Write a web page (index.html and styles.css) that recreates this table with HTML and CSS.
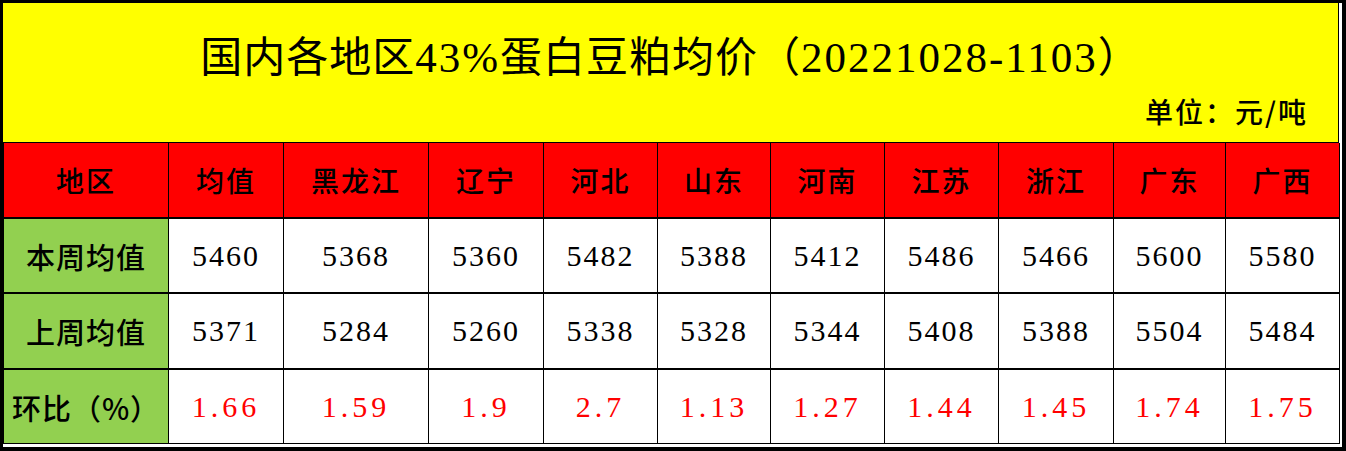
FILE: index.html
```html
<!DOCTYPE html>
<html lang="zh-CN">
  <head>
    <meta charset="UTF-8">
    <meta name="viewport" content="width=device-width, initial-scale=1.0">
    <title>国内各地区43%蛋白豆粕均价</title>
    <link rel="stylesheet" href="styles.css">
  </head>
  <body>
    <div class="frame">
      <div class="sheet">
        <div class="title-block">
          <h1 class="title">国内各地区<span class="num">43%</span>蛋白豆粕均价（<span class="num">20221028-1103</span>）</h1>
          <div class="unit">单位：元/吨</div>
        </div>
        <table class="prices">
          <colgroup>
            <col style="width:165px">
            <col style="width:115px">
            <col style="width:145px">
            <col style="width:115px">
            <col style="width:114px">
            <col style="width:113px">
            <col style="width:114px">
            <col style="width:114px">
            <col style="width:115px">
            <col style="width:112px">
            <col style="width:114px">
          </colgroup>
          <tr class="head">
            <th>地区</th>
            <th>均值</th>
            <th>黑龙江</th>
            <th>辽宁</th>
            <th>河北</th>
            <th>山东</th>
            <th>河南</th>
            <th>江苏</th>
            <th>浙江</th>
            <th>广东</th>
            <th>广西</th>
          </tr>
          <tr class="row this-week">
            <th class="label">本周均值</th>
            <td>5460</td>
            <td>5368</td>
            <td>5360</td>
            <td>5482</td>
            <td>5388</td>
            <td>5412</td>
            <td>5486</td>
            <td>5466</td>
            <td>5600</td>
            <td>5580</td>
          </tr>
          <tr class="row last-week">
            <th class="label">上周均值</th>
            <td>5371</td>
            <td>5284</td>
            <td>5260</td>
            <td>5338</td>
            <td>5328</td>
            <td>5344</td>
            <td>5408</td>
            <td>5388</td>
            <td>5504</td>
            <td>5484</td>
          </tr>
          <tr class="row change">
            <th class="label">环比（%）</th>
            <td>1.66</td>
            <td>1.59</td>
            <td>1.9</td>
            <td>2.7</td>
            <td>1.13</td>
            <td>1.27</td>
            <td>1.44</td>
            <td>1.45</td>
            <td>1.74</td>
            <td>1.75</td>
          </tr>
        </table>
      </div>
    </div>
  </body>
</html>
```

FILE: styles.css
```css
html, body {
  margin: 0;
  padding: 0;
  background-color: white;
  font-family: "Noto Sans CJK SC", sans-serif;
}
.frame {
  width: 1346px;
  height: 451px;
  box-sizing: border-box;
  border-left: 3px solid black;
  border-top: 3px solid black;
  border-right: 4px solid black;
  border-bottom: 4px solid black;
}
.sheet {
  width: 1336px;
}
.title-block {
  height: 140px;
  box-sizing: border-box;
  background-color: #ffff00;
  border-right: 1px solid black;
  border-bottom: 1px solid black;
  padding-top: 29px;
}
.title {
  margin: 0;
  font-size: 42px;
  font-weight: 400;
  line-height: 44px;
  letter-spacing: 1px;
  text-align: center;
  color: black;
}
.title .num {
  font-family: "Liberation Serif", serif;
  font-size: 43px;
  letter-spacing: 2px;
}
.unit {
  margin-top: 16px;
  padding-right: 30px;
  font-size: 28px;
  font-weight: 500;
  line-height: 30px;
  letter-spacing: 2px;
  text-align: right;
}
.prices {
  width: 1336px;
  table-layout: fixed;
  border-collapse: collapse;
}
.prices th, .prices td {
  padding: 0;
  text-align: center;
  vertical-align: middle;
  border-left: 1px solid black;
  border-right: 1px solid black;
}
.head th {
  height: 74px;
  background-color: #ff0000;
  font-size: 28px;
  font-weight: 500;
  letter-spacing: 2px;
  border-bottom: 2px solid black;
}
.row td {
  font-family: "Liberation Serif", serif;
  font-size: 30px;
  letter-spacing: 2px;
  color: black;
}
.row .label {
  background-color: #92d050;
  font-size: 29px;
  font-weight: 500;
  letter-spacing: 1px;
}
.this-week th, .this-week td {
  height: 73px;
  border-bottom: 2px solid black;
}
.last-week th, .last-week td {
  height: 74px;
  border-bottom: 2px solid black;
}
.change th, .change td {
  height: 73px;
  border-bottom: 1px solid black;
}
.change td {
  color: #ff0000;
  letter-spacing: 4px;
}
```
